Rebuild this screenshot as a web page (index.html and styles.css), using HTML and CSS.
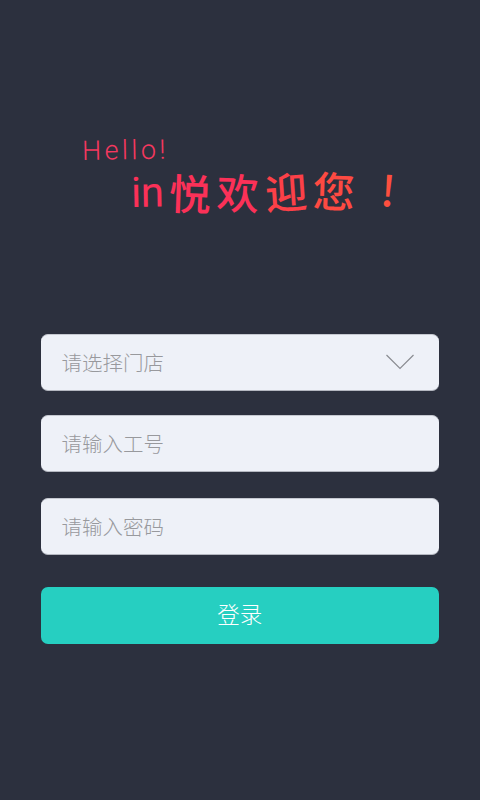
FILE: index.html
```html
<!doctype html>
<html lang="zh-CN">
  <head>
    <meta charset="UTF-8" />
    <meta name="viewport" content="width=device-width, initial-scale=1.0" />
    <title>登录</title>
    <link rel="stylesheet" href="styles.css">
  </head>

  <body>
    <div class="main">
      <div class="greeting">
        <div class="hello">Hello!</div>
        <div class="welcome">
          <span class="brand">in</span><span class="tilt-down">悦</span><span class="tilt-down">欢</span><span class="tilt-up">迎</span><span class="tilt-down">您</span><span class="mark">!</span>
        </div>
      </div>

      <div class="form">
        <div class="field field-store">
          <span>请选择门店</span>
          <svg class="arrow" width="28" height="16" viewBox="0 0 28 16">
            <path d="M0.5 1 L14 14.5 L27.5 1" fill="none" stroke="#8a8c92" stroke-width="1.2" />
          </svg>
        </div>
        <div class="field field-id">请输入工号</div>
        <div class="field field-password">请输入密码</div>
        <button class="login">登录</button>
      </div>
    </div>
  </body>
</html>
```

FILE: styles.css
```css
/* General styles */
body {
  margin: 0;
  padding: 0;
  height: 100vh;
  background: #2c303e;
  font-family: 'Noto Sans CJK SC', 'Noto Sans', sans-serif;
  overflow: hidden;
}

.main {
  padding: 0 41.5px 0 41px;
}

.greeting {
  height: 334px;
  padding-top: 135px;
  box-sizing: border-box;
}

.hello {
  margin-left: 41px;
  font-family: Roboto, sans-serif;
  font-size: 27px;
  line-height: 32px;
  font-weight: 300;
  letter-spacing: 3.4px;
  color: #f5385f;
  transform: rotate(-1deg);
  transform-origin: left center;
}

.welcome {
  display: flex;
  align-items: center;
  margin-left: 90px;
  margin-top: 1px;
  font-size: 42px;
  line-height: 50px;
  font-weight: 500;
  white-space: nowrap;
  color: #fb3158;
  transform: rotate(-1deg);
  transform-origin: left center;
}

.brand {
  margin-right: 6px;
  font-family: Roboto, sans-serif;
  font-weight: 400;
  letter-spacing: -0.5px;
}

.tilt-down {
  display: inline-block;
  margin-right: 6px;
  transform: rotate(3deg);
}

.tilt-up {
  display: inline-block;
  margin-right: 6px;
  color: #fc4048;
  transform: rotate(-3deg);
}

.tilt-down:nth-child(5) {
  color: #fd4a42;
}

.mark {
  display: inline-block;
  margin-left: 20px;
  color: #fd4f3f;
  transform: rotate(6deg);
}

.field {
  display: flex;
  align-items: center;
  justify-content: space-between;
  box-sizing: border-box;
  height: 56.5px;
  padding: 0 24.5px 0 20.5px;
  background: #eef1f8;
  border-bottom: 1px solid #b4b7c0;
  border-top: 1px solid #c5c8d0;
  border-radius: 7px;
  font-size: 20.5px;
  font-weight: 300;
  color: #98999d;
}

.field-store {
  margin-bottom: 24.5px;
}

.field-id {
  margin-bottom: 26.5px;
}

.field-password {
  margin-bottom: 32.5px;
}

.arrow {
  display: block;
}

.login {
  display: block;
  width: 100%;
  height: 56.5px;
  padding: 0 0 4px;
  border: none;
  border-radius: 7px;
  background: #26cfc1;
  color: #ffffff;
  font-family: inherit;
  font-size: 22.5px;
  font-weight: 300;
}
```
